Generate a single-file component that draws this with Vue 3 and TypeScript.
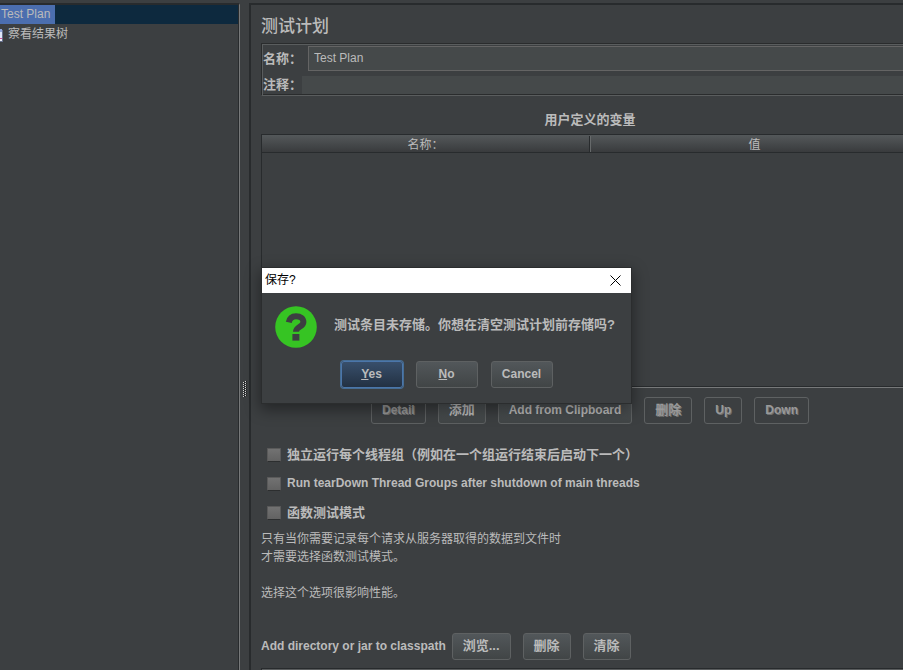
<script setup lang="ts">
import { ref } from 'vue'

interface ActionButton {
  label: string
  disabled: boolean
}

const planName = ref('Test Plan')
const comment = ref('')
const dialogOpen = ref(true)

const columns: string[] = ['名称：', '值']

const variableActions: ActionButton[] = [
  { label: 'Detail', disabled: true },
  { label: '添加', disabled: false },
  { label: 'Add from Clipboard', disabled: false },
  { label: '删除', disabled: true },
  { label: 'Up', disabled: true },
  { label: 'Down', disabled: true },
]

const options = ref([
  { id: 'serialize', label: '独立运行每个线程组（例如在一个组运行结束后启动下一个）', checked: false },
  { id: 'teardown', label: 'Run tearDown Thread Groups after shutdown of main threads', checked: false },
  { id: 'functional', label: '函数测试模式', checked: false },
])

const classpathActions: string[] = ['浏览...', '删除', '清除']

const gripRows: number[] = [0, 1, 2, 3, 4, 5, 6, 7]

const isCjk = (text: string): boolean => /[\u4e00-\u9fff]/.test(text)

function closeDialog(): void {
  dialogOpen.value = false
}
</script>

<template>
  <div class="window">
    <nav class="tree">
      <ul class="tree-list">
        <li class="tree-row selected"><a href="#plan" class="tree-link">Test Plan</a></li>
        <li class="tree-row">
          <svg class="tree-icon" width="3" height="14" viewBox="0 0 3 14" aria-hidden="true">
            <rect width="2" height="5" fill="#8fa6dc" />
            <rect y="3" width="2" height="6" fill="#dfe8fa" />
            <rect y="9" width="2" height="1" fill="#d0509c" />
            <rect y="10" width="2" height="2" fill="#eef0f8" />
            <path d="M2 1h1v12H0v-1h2z" fill="#66708c" />
          </svg>
          <a href="#results" class="tree-link">察看结果树</a>
        </li>
      </ul>
    </nav>

    <div class="divider">
      <svg width="4" height="16" viewBox="0 0 4 16" shape-rendering="crispEdges" aria-hidden="true">
        <g v-for="r in gripRows" :key="r">
          <rect x="2" :y="r * 2" width="1" height="1" fill="#d8d8d8" />
          <rect x="3" :y="r * 2" width="1" height="1" fill="#1c1d1e" />
          <rect x="0" :y="r * 2 + 1" width="1" height="1" fill="#d8d8d8" />
          <rect x="1" :y="r * 2 + 1" width="1" height="1" fill="#1c1d1e" />
        </g>
      </svg>
    </div>

    <main class="panel">
      <h1 class="title">测试计划</h1>

      <section class="fields">
        <div class="field">
          <label for="plan-name">名称：</label>
          <input id="plan-name" v-model="planName" class="name-input" type="text" />
        </div>
        <div class="field">
          <label for="plan-comment">注释：</label>
          <input id="plan-comment" v-model="comment" class="comment-input" type="text" />
        </div>
      </section>

      <h2 class="subtitle">用户定义的变量</h2>
      <div class="table-box">
        <table class="variables">
          <thead>
            <tr>
              <th v-for="c in columns" :key="c" scope="col"><span class="th-text">{{ c }}</span></th>
            </tr>
          </thead>
          <tbody></tbody>
        </table>
      </div>

      <div class="actions">
        <button
          v-for="a in variableActions"
          :key="a.label"
          type="button"
          class="btn"
          :class="{ cjk: isCjk(a.label) }"
          :disabled="a.disabled"
        >{{ a.label }}</button>
      </div>

      <div class="options">
        <div v-for="o in options" :key="o.id" class="option">
          <input :id="o.id" v-model="o.checked" class="check" type="checkbox" />
          <label :for="o.id" :class="isCjk(o.label) ? 'cjk' : 'latin'">{{ o.label }}</label>
        </div>
      </div>

      <p class="note">只有当你需要记录每个请求从服务器取得的数据到文件时<br />才需要选择函数测试模式。<br /><br />选择这个选项很影响性能。</p>

      <div class="classpath">
        <span class="classpath-label latin">Add directory or jar to classpath</span>
        <div class="classpath-actions">
          <button v-for="c in classpathActions" :key="c" type="button" class="btn cjk">{{ c }}</button>
        </div>
      </div>
      <div class="classpath-list"></div>
    </main>

    <div v-if="dialogOpen" class="dialog" role="dialog" aria-labelledby="dialog-title">
      <header class="dialog-bar">
        <span id="dialog-title">保存?</span>
        <button type="button" class="close" aria-label="Close" @click="closeDialog">
          <svg width="11" height="11" viewBox="0 0 11 11" aria-hidden="true">
            <path d="M.5.5l10 10M10.5.5l-10 10" stroke="#000" stroke-width="1" fill="none" />
          </svg>
        </button>
      </header>
      <div class="dialog-body">
        <svg class="question" width="42" height="42" viewBox="0 0 42 42" aria-hidden="true">
          <circle cx="21" cy="21" r="20.8" fill="#36c423" />
          <path d="M13.8 16.4C14.6 12.2 17.2 10.2 21 10.2c4.6 0 7.4 2.2 7.4 5.8 0 5-7.4 4.6-7.4 9.8" fill="none" stroke="#3c3f41" stroke-width="6" />
          <rect x="17.4" y="28" width="7" height="6.6" fill="#3c3f41" />
        </svg>
        <p class="message">测试条目未存储。你想在清空测试计划前存储吗?</p>
      </div>
      <footer class="dialog-actions">
        <button type="button" class="btn wide primary" @click="closeDialog"><u>Y</u>es</button>
        <button type="button" class="btn wide" @click="closeDialog"><u>N</u>o</button>
        <button type="button" class="btn wide" @click="closeDialog">Cancel</button>
      </footer>
    </div>
  </div>
</template>

<style>
body {
  margin: 0;
  background: #3c3f41;
}
</style>

<style scoped>
.window {
  position: relative;
  display: flex;
  box-sizing: border-box;
  height: 100vh;
  padding-top: 3px;
  overflow: hidden;
  background: #3c3f41;
  color: #bbb;
  font: 12px/18px "Liberation Sans", "Noto Sans CJK SC", sans-serif;
}

.window *,
.window *::before {
  box-sizing: border-box;
}

.tree {
  flex: 0 0 240px;
  border-top: 2px solid #282b2d;
  border-right: 1px solid #77797a;
  box-shadow: inset -1px 0 #282b2d;
}

.tree-list {
  margin: 0;
  padding: 0 1px 0 0;
  list-style: none;
}

.tree-row {
  display: flex;
  align-items: center;
  height: 19px;
}

.tree-row.selected {
  background: #0d293e;
}

.selected .tree-link {
  padding: 0 5px 0 1px;
  background: #4b6eaf;
  line-height: 19px;
}

.tree-link {
  color: #bbb;
  text-decoration: none;
}

.tree-icon {
  margin-right: 5px;
  margin-top: 4px;
}

.divider {
  flex: 0 0 9px;
  padding: 378px 0 0 3px;
  line-height: 0;
}

.panel {
  flex: 1 0 0;
  min-width: 0;
  margin-right: -16px;
  padding-left: 10px;
  border: solid #282b2d;
  border-width: 2px 0 0 2px;
}

.title {
  margin: 10px 0 4px;
  font-size: 17px;
  line-height: 24px;
  font-weight: 500;
}

.fields {
  display: grid;
  gap: 5px;
  padding: 2px 0 1px 1px;
  border: 1px solid #2a2c2d;
  border-bottom-color: #5a5d5e;
  box-shadow: inset 1px 1px #5a5d5e, inset 0 -1px #2a2c2d;
}

.field {
  display: flex;
  align-items: center;
}

.field label {
  font-size: 13px;
  font-weight: 700;
}

.field input {
  flex: 1;
  min-width: 0;
  padding: 0 5px 2px;
  border: 0;
  outline: 0;
  border-radius: 0;
  background: #45494a;
  color: #bbb;
  font: inherit;
}

.field .name-input {
  height: 25px;
  margin-left: 6px;
  border: 1px solid #646464;
}

.field .comment-input {
  height: 18px;
}

.subtitle {
  margin: 14px 0 4px;
  font-size: 13px;
  line-height: 20px;
  text-align: center;
}

.table-box {
  height: 254px;
  border: 1px solid #282b2d;
  border-bottom-color: #77797a;
  box-shadow: inset 0 -1px #282b2d;
}

.variables {
  width: 100%;
  border-collapse: separate;
  border-spacing: 0;
  table-layout: fixed;
}

.variables th {
  height: 18px;
  padding: 1px 0 0;
  border-bottom: 1px solid #282b2d;
  background: linear-gradient(#54585a, #393b3d);
  font-weight: 400;
}

.th-text {
  display: block;
  height: 16px;
  line-height: 18px;
}

th:first-child .th-text {
  border-right: 1px solid #282b2d;
}

th:last-child .th-text {
  border-left: 1px solid #66696a;
}

.actions {
  display: flex;
  justify-content: center;
  gap: 12px;
  margin-top: 9px;
}

.btn {
  height: 27px;
  padding: 0 10px 2px;
  border: 1px solid #5e6162;
  border-radius: 3px;
  background: linear-gradient(#52575a, #414546);
  color: #bbb;
  font: 700 12px/18px "Liberation Sans", "Noto Sans CJK SC", sans-serif;
}

.btn.cjk,
label.cjk {
  font-size: 13px;
}

.latin {
  padding-bottom: 2px;
}

.btn:disabled {
  background: none;
  color: #999;
  text-shadow: 1px 1px #707070;
}

.options {
  margin-top: 16px;
}

.option {
  display: flex;
  align-items: center;
  gap: 6px;
  height: 29px;
  padding-left: 6px;
  font-weight: 700;
}

.check {
  appearance: none;
  width: 14px;
  height: 14px;
  margin: 0;
  border: 1px solid #5a5a5a;
  border-bottom-color: #2c2e2f;
  border-radius: 1px;
  background: linear-gradient(#727272, #626262);
}

.note {
  margin: 3px 0 31px;
}

.classpath {
  display: flex;
  align-items: center;
  gap: 6px;
}

.classpath-label {
  font-weight: 700;
}

.classpath-actions {
  display: flex;
  gap: 12px;
}

.classpath-list {
  height: 40px;
  margin-top: 8px;
  border: 1px solid #282b2d;
  box-shadow: inset 0 1px #5a5d5e;
}

.dialog {
  position: absolute;
  left: 262px;
  top: 268px;
  width: 369px;
  background: #3c3f41;
  box-shadow: 0 0 0 1px #2b2d2e, 0 5px 14px 2px rgba(0, 0, 0, 0.4);
}

.dialog-bar {
  display: flex;
  align-items: center;
  justify-content: space-between;
  height: 25px;
  padding: 0 3px;
  background: #fff;
  color: #000;
}

#dialog-title {
  padding-bottom: 1px;
}

.close {
  display: grid;
  place-items: center;
  width: 25px;
  height: 25px;
  padding: 0;
  border: 0;
  background: none;
}

.dialog-body {
  display: flex;
  align-items: center;
  gap: 17px;
  padding: 13px 13px 12px;
}

.message {
  margin: 0;
  padding-bottom: 4px;
  font-size: 13px;
  font-weight: 700;
  white-space: nowrap;
}

.dialog-actions {
  display: flex;
  justify-content: center;
  gap: 13px;
  padding: 1px 0 15px;
}

.btn.wide {
  width: 62px;
}

.btn.primary {
  border-color: #4b76aa;
  background: linear-gradient(#384f6b, #233143);
  box-shadow: 0 0 0 1px #466d94;
}
</style>
